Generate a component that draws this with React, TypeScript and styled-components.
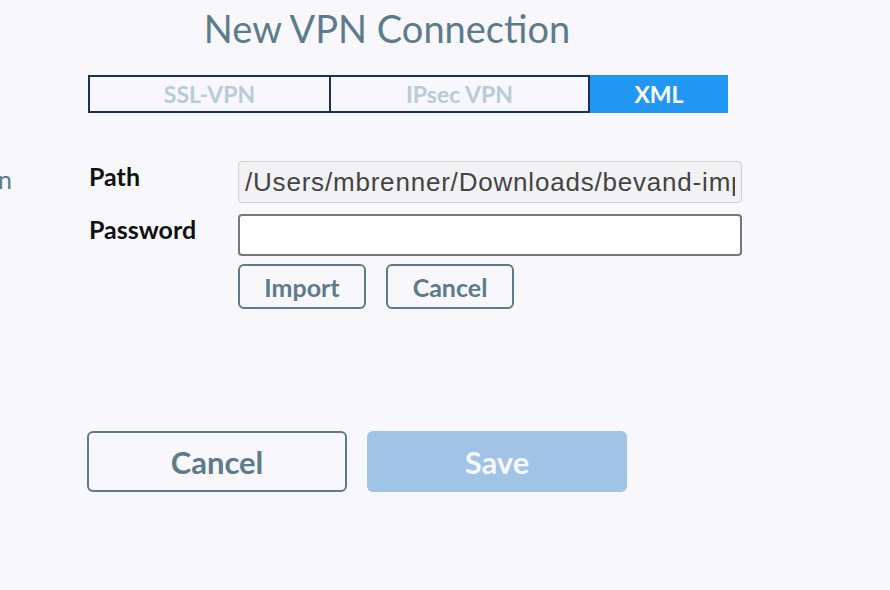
import styled, { createGlobalStyle } from 'styled-components';

const GlobalStyle = createGlobalStyle`
  html, body {
    margin: 0;
    padding: 0;
    background: #f7f7fc;
    font-family: Lato, "Noto Sans", sans-serif;
  }
`;

const Page = styled.div`
  width: 890px;
  height: 590px;
  overflow: hidden;
  display: flex;
  flex-direction: column;
`;

const Head = styled.div`
  padding-left: 88px;
  display: flex;
  flex-direction: column;
`;

const Title = styled.h1`
  width: 598px;
  margin: 6px 0 0;
  text-align: center;
  font-size: 38px;
  font-weight: 400;
  color: #5e7b8a;
  line-height: 44px;
`;

const Tabs = styled.div`
  display: flex;
  margin-top: 25px;
  width: 640px;
  height: 38px;
`;

const Tab = styled.div<{ $w: number; $active?: boolean }>`
  width: ${p => p.$w}px;
  box-sizing: border-box;
  display: flex;
  align-items: center;
  justify-content: center;
  font-size: 23px;
  font-weight: 700;
  border: ${p => (p.$active ? '0' : '2px solid #15325a')};
  background: ${p => (p.$active ? '#2196f3' : 'transparent')};
  color: ${p => (p.$active ? '#ffffff' : '#b8ccd8')};
  & + & {
    border-left: ${p => (p.$active ? '0' : 'none')};
  }
`;

const Form = styled.div`
  margin-top: 48px;
  display: grid;
  grid-template-columns: 89px 149px 504px;
  row-gap: 11px;
  align-items: start;
`;

const Side = styled.div`
  font-size: 25px;
  color: #5e7b8a;
  margin-left: -2px;
  line-height: 36px;
`;

const Label = styled.div`
  font-size: 25px;
  font-weight: 700;
  color: #111;
  line-height: 30px;
  grid-column: 2;
`;

const Field = styled.input<{ $readonly?: boolean }>`
  grid-column: 3;
  box-sizing: border-box;
  width: 504px;
  height: 42px;
  margin: 0;
  padding: 0 6px;
  border-radius: 4px;
  font-family: "Liberation Sans", Arial, sans-serif;
  font-size: 26px;
  letter-spacing: 0.8px;
  color: #444;
  outline: none;
  background: ${p => (p.$readonly ? '#f2f2f4' : '#ffffff')};
  border: ${p => (p.$readonly ? '1px solid #d0d0d4' : '2px solid #777')};
`;

const SmallRow = styled.div`
  grid-column: 3;
  display: flex;
  gap: 20px;
  margin-top: -3px;
`;

const SmallButton = styled.button`
  box-sizing: border-box;
  width: 128px;
  height: 45px;
  border: 2px solid #5e7b8a;
  border-radius: 6px;
  background: transparent;
  color: #5e7b8a;
  font-family: Lato, sans-serif;
  font-size: 25px;
  font-weight: 700;
  padding: 0;
`;

const Footer = styled.div`
  margin-top: 122px;
  padding-left: 87px;
  display: flex;
  gap: 20px;
`;

const BigButton = styled.button<{ $primary?: boolean }>`
  box-sizing: border-box;
  width: 260px;
  height: 61px;
  border-radius: 6px;
  border: ${p => (p.$primary ? '0' : '2px solid #5e7b8a')};
  background: ${p => (p.$primary ? '#a1c3e5' : 'transparent')};
  color: ${p => (p.$primary ? '#f4f8fc' : '#5e7b8a')};
  font-family: Lato, sans-serif;
  font-size: 31px;
  font-weight: 700;
  padding: 0;
`;

export default function App() {
  return (
    <Page>
      <GlobalStyle />
      <Head>
        <Title>New VPN Connection</Title>
        <Tabs>
          <Tab $w={243}>SSL-VPN</Tab>
          <Tab $w={259}>IPsec VPN</Tab>
          <Tab $w={138} $active>XML</Tab>
        </Tabs>
      </Head>
      <Form>
        <Side>n</Side>
        <Label>Path</Label>
        <Field $readonly readOnly value="/Users/mbrenner/Downloads/bevand-import.xml" />
        <Label>Password</Label>
        <Field type="password" defaultValue="" />
        <SmallRow>
          <SmallButton>Import</SmallButton>
          <SmallButton>Cancel</SmallButton>
        </SmallRow>
      </Form>
      <Footer>
        <BigButton>Cancel</BigButton>
        <BigButton $primary>Save</BigButton>
      </Footer>
    </Page>
  );
}
